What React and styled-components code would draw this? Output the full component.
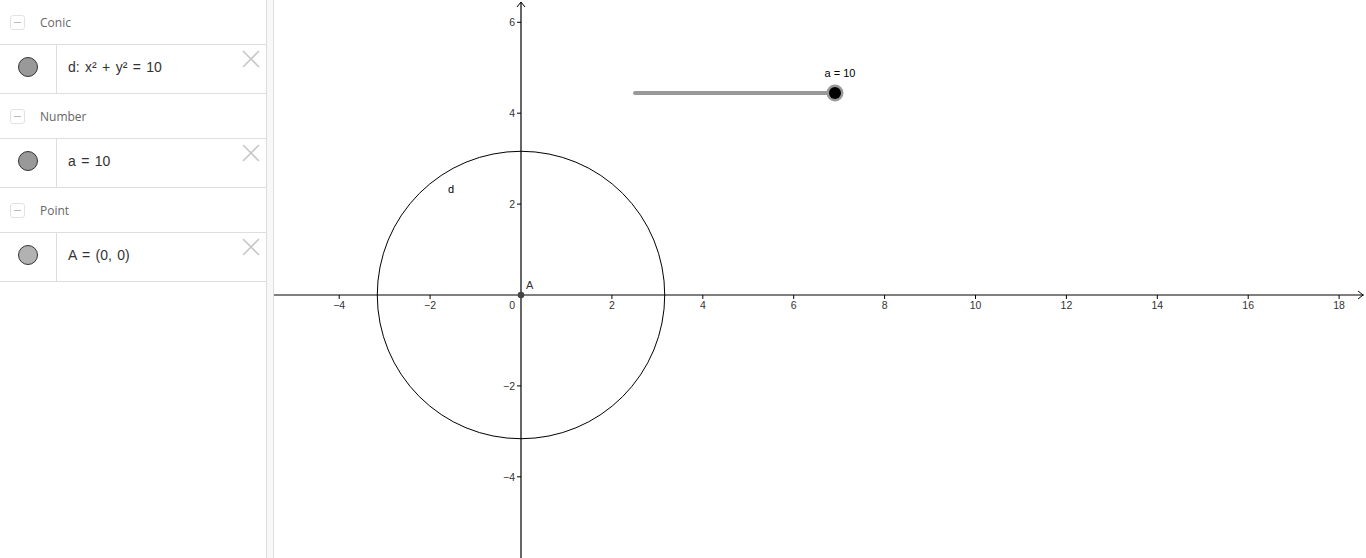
import React from 'react'
import styled, { createGlobalStyle } from 'styled-components'

const Global = createGlobalStyle`
    html, body { margin: 0; padding: 0; background: #fff; }
    body { font-family: "Liberation Sans", Arial, sans-serif; overflow: hidden; }
`

const SCALE = 45.45
const OX = 247
const OY = 295
const GW = 1092
const GH = 558
const FONT = 'Liberation Sans, Arial, sans-serif'

const groups = [
    { title: 'Conic', text: 'd: x² + y² = 10', fill: '#999' },
    { title: 'Number', text: 'a = 10', fill: '#999' },
    { title: 'Point', text: 'A = (0, 0)', fill: '#b2b2b2' },
]

const App = () => {
    return (
        <Container>
            <Global />
            <AlgebraPanel>
                {groups.map(g => (
                    <div key={g.title}>
                        <GroupHeader>
                            <Collapse><span /></Collapse>
                            <GroupTitle>{g.title}</GroupTitle>
                        </GroupHeader>
                        <ItemRow>
                            <Marble>
                                <Dot fill={g.fill} />
                            </Marble>
                            <ItemText>{g.text}</ItemText>
                            <DeleteBtn>
                                <svg width="18" height="18" viewBox="0 0 18 18">
                                    <path d="M1 1 L17 17 M17 1 L1 17" stroke="#c8c8c8" strokeWidth="1.6" fill="none" />
                                </svg>
                            </DeleteBtn>
                        </ItemRow>
                    </div>
                ))}
            </AlgebraPanel>
            <Splitter />
            <Graphics>
                <GraphView />
            </Graphics>
        </Container>
    )
}

const px = v => OX + v * SCALE
const py = v => OY - v * SCALE

const GraphView = () => {
    const xTicks = [-4, -2, 2, 4, 6, 8, 10, 12, 14, 16, 18]
    const yTicks = [-4, -2, 2, 4, 6]
    const fmt = n => (n < 0 ? '\u2212' + Math.abs(n) : String(n))
    const r = Math.sqrt(10) * SCALE
    return (
        <svg width={GW} height={GH} viewBox={`0 0 ${GW} ${GH}`} style={{ display: 'block' }}>
            {/* axes */}
            <line x1="0" y1={OY} x2={GW - 2} y2={OY} stroke="#000" strokeWidth="1.2" />
            <path d={`M${GW - 8} ${OY - 4} L${GW - 3} ${OY} L${GW - 8} ${OY + 4}`} stroke="#000" fill="none" strokeWidth="1" />
            <line x1={OX} y1="2" x2={OX} y2={GH} stroke="#000" strokeWidth="1.2" />
            <path d={`M${OX - 4} 7 L${OX} 2 L${OX + 4} 7`} stroke="#000" fill="none" strokeWidth="1" />
            {xTicks.map(t => (
                <g key={'x' + t}>
                    <line x1={px(t)} y1={OY} x2={px(t)} y2={OY + 4} stroke="#000" strokeWidth="1" />
                    <text x={px(t)} y={OY + 14} fontSize="10.5" textAnchor="middle" fill="#333" fontFamily={FONT}>{fmt(t)}</text>
                </g>
            ))}
            <text x={OX - 6} y={OY + 14} fontSize="10.5" textAnchor="end" fill="#333" fontFamily={FONT}>0</text>
            {yTicks.map(t => (
                <g key={'y' + t}>
                    <line x1={OX - 4} y1={py(t)} x2={OX} y2={py(t)} stroke="#000" strokeWidth="1" />
                    <text x={OX - 6} y={py(t) + 4} fontSize="10.5" textAnchor="end" fill="#333" fontFamily={FONT}>{fmt(t)}</text>
                </g>
            ))}
            {/* conic d */}
            <circle cx={OX} cy={OY} r={r} fill="none" stroke="#000" strokeWidth="1" />
            <text x={174} y={193} fontSize="11" fill="#000" fontFamily={FONT}>d</text>
            {/* point A */}
            <circle cx={OX} cy={OY} r="3.3" fill="#444" />
            <text x={252} y={289} fontSize="11" fill="#333" fontFamily={FONT}>A</text>
            {/* slider a */}
            <line x1={361} y1={93} x2={561} y2={93} stroke="#999" strokeWidth="4" strokeLinecap="round" />
            <circle cx={561} cy={93} r="8.5" fill="#999" />
            <circle cx={561} cy={93} r="6" fill="#000" />
            <text x={566} y={77} fontSize="11" textAnchor="middle" fill="#000" fontFamily={FONT}>a = 10</text>
        </svg>
    )
}

export default App

const Container = styled.div`
    display: flex;
    width: 1366px;
    height: 558px;
    overflow: hidden;
    background: #fff;
`

const AlgebraPanel = styled.div`
    width: 266px;
    flex-shrink: 0;
    background: #fff;
`

const GroupHeader = styled.div`
    height: 45px;
    display: flex;
    align-items: center;
    border-bottom: 1px solid #ddd;
    padding-left: 10px;
    padding-top: 1px;
    box-sizing: border-box;
`

const Collapse = styled.div`
    width: 13px;
    height: 13px;
    border: 1px solid #e2e2e2;
    border-radius: 3px;
    display: flex;
    align-items: center;
    justify-content: center;
    span {
        width: 7px;
        height: 1.5px;
        background: #bbb;
    }
`

const GroupTitle = styled.div`
    margin-left: 15px;
    font-family: "Open Sans", "Liberation Sans", sans-serif;
    font-size: 12px;
    color: #666;
`

const ItemRow = styled.div`
    height: 49px;
    display: flex;
    align-items: stretch;
    border-bottom: 1px solid #ddd;
    position: relative;
    box-sizing: border-box;
`

const Marble = styled.div`
    width: 56px;
    border-right: 1px solid #ddd;
    display: flex;
    align-items: center;
    justify-content: center;
    padding-bottom: 4px;
`

const Dot = styled.div`
    width: 18px;
    height: 18px;
    border-radius: 50%;
    background: ${p => p.fill};
    border: 1px solid #333;
`

const ItemText = styled.div`
    display: flex;
    align-items: center;
    padding-left: 11px;
    padding-bottom: 4px;
    font-family: "Liberation Sans", Arial, sans-serif;
    font-size: 14px;
    word-spacing: 1.5px;
    color: #333;
`

const DeleteBtn = styled.div`
    position: absolute;
    right: 6px;
    top: 5px;
    width: 18px;
    height: 18px;
`

const Splitter = styled.div`
    width: 6px;
    flex-shrink: 0;
    background: #f8f8f8;
    border-left: 1px solid #ddd;
    border-right: 1px solid #ddd;
`

const Graphics = styled.div`
    flex: 1;
    overflow: hidden;
`
